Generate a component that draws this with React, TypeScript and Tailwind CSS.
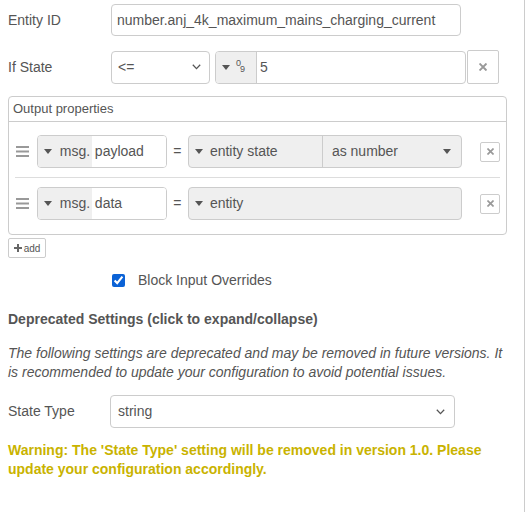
import React from "react";

function Caret() {
    return (
        <svg width="8" height="5" viewBox="0 0 8 5" className="shrink-0">
            <path d="M0 0 L8 0 L4 5 Z" fill="#555" />
        </svg>
    );
}

function Chevron() {
    return (
        <svg width="9" height="6" viewBox="0 0 9 6" className="shrink-0">
            <path d="M0.8 0.8 L4.5 4.6 L8.2 0.8" fill="none" stroke="#555" strokeWidth="1.3" />
        </svg>
    );
}

function Times({ size = 9 }: { size?: number }) {
    return (
        <svg width={size} height={size} viewBox="0 0 10 10" className="shrink-0">
            <path d="M1.5 1.5 L8.5 8.5 M8.5 1.5 L1.5 8.5" stroke="#999" strokeWidth="2.4" strokeLinecap="square" />
        </svg>
    );
}

function Handle() {
    return (
        <svg width="13" height="11" viewBox="0 0 13 11" className="shrink-0">
            <rect x="0" y="0" width="13" height="2" fill="#999" />
            <rect x="0" y="4.5" width="13" height="2" fill="#999" />
            <rect x="0" y="9" width="13" height="2" fill="#999" />
        </svg>
    );
}

function OutputRow({ name, value, extra, last }: { name: string; value: string; extra?: string; last?: boolean }) {
    return (
        <div className={`flex items-center py-[9px] ${last ? "" : "border-b border-[#ddd]"}`}>
            <div className="w-[22px] pl-[1px]">
                <Handle />
            </div>
            <div className="flex h-[33px] w-[131px] rounded-[4px] border border-[#ccc] overflow-hidden">
                <div className="flex w-[54px] items-center gap-[8px] bg-[#efefef] pl-[6px]">
                    <Caret />
                    <span>msg.</span>
                </div>
                <div className="flex flex-1 items-center pl-[3px] bg-white text-[#555]">{name}</div>
            </div>
            <div className="w-[21px] text-center">=</div>
            <div className="flex h-[33px] w-[276px] rounded-[4px] border border-[#ccc] bg-[#efefef] overflow-hidden">
                <div className={`flex items-center gap-[7px] pl-[6px] ${extra ? "w-[134px] border-r border-[#ccc]" : "flex-1"}`}>
                    <Caret />
                    <span>{value}</span>
                </div>
                {extra && (
                    <div className="flex flex-1 items-center justify-between pl-[9px] pr-[10px]">
                        <span>{extra}</span>
                        <Caret />
                    </div>
                )}
            </div>
            <div className="ml-[18px] flex h-[20px] w-[20px] items-center justify-center rounded-[2px] border border-[#ccc]">
                <Times size={7} />
            </div>
        </div>
    );
}

export default function App() {
    return (
        <div className="h-[512px] w-[525px] border-r border-[#ccc] bg-white pl-2 pt-[4px] font-['Liberation_Sans',Arial,sans-serif] text-[14px] text-[#555]">
            {/* Entity ID */}
            <div className="flex items-center">
                <label className="w-[103px]">Entity ID</label>
                <div className="flex h-[32px] w-[350px] items-center rounded-[4px] border border-[#ccc] px-[5px]">
                    number.anj_4k_maximum_mains_charging_current
                </div>
            </div>

            {/* If State */}
            <div className="mt-[14px] flex items-center">
                <label className="w-[103px]">If State</label>
                <div className="flex h-[33px] w-[99px] items-center justify-between rounded-[4px] border border-[#ccc] pl-[6px] pr-[8px]">
                    <span>&lt;=</span>
                    <Chevron />
                </div>
                <div className="ml-[5px] flex h-[33px] w-[251px] overflow-hidden rounded-[4px] border border-[#ccc]">
                    <div className="flex w-[41px] items-center gap-[6px] border-r border-[#ccc] bg-[#efefef] pl-[6px]">
                        <Caret />
                        <span className="relative h-[16px] w-[10px] text-[9px] leading-none">
                            <span className="absolute left-0 top-0">0</span>
                            <span className="absolute left-[4px] top-[6px]">9</span>
                        </span>
                    </div>
                    <div className="flex flex-1 items-center pl-[3px]">5</div>
                </div>
                <div className="ml-[1px] flex h-[34px] w-[32px] items-center justify-center rounded-[2px] border border-[#ccc]">
                    <Times size={8} />
                </div>
            </div>

            {/* Output properties */}
            <div className="mt-[12px] w-[499px] rounded-[4px] border border-[#ccc]">
                <div className="flex h-[25px] items-center border-b border-[#ccc] pl-[4px] text-[13px]">Output properties</div>
                <div className="px-[6px] pt-[4px] pb-[5px]">
                    <OutputRow name="payload" value="entity state" extra="as number" />
                    <OutputRow name="data" value="entity" last />
                </div>
            </div>

            <div className="mt-[3px] flex h-[20px] w-[38px] items-center justify-center gap-[2px] rounded-[2px] border border-[#ccc] text-[10px]">
                <svg width="8" height="8" viewBox="0 0 8 8">
                    <path d="M3 0 H5 V3 H8 V5 H5 V8 H3 V5 H0 V3 H3 Z" fill="#666" />
                </svg>
                <span>add</span>
            </div>

            {/* Block Input Overrides */}
            <div className="mt-[12px] flex items-center pl-[104px]">
                <input type="checkbox" defaultChecked className="m-0 h-[13px] w-[13px] accent-[#0b62d6]" />
                <span className="ml-[13px]">Block Input Overrides</span>
            </div>

            {/* Deprecated */}
            <div className="mt-[18px] font-bold">Deprecated Settings (click to expand/collapse)</div>
            <p className="mt-[14px] pr-[20px] italic leading-[19px]">
                The following settings are deprecated and may be removed in future versions. It is recommended to update your configuration to avoid potential issues.
            </p>

            <div className="mt-[13px] flex items-center">
                <label className="w-[102px]">State Type</label>
                <div className="flex h-[33px] w-[345px] items-center justify-between rounded-[4px] border border-[#ccc] pl-[7px] pr-[9px]">
                    <span>string</span>
                    <Chevron />
                </div>
            </div>

            <p className="mt-[13px] pr-[30px] font-bold leading-[19px] text-[#c9b300]">
                Warning: The 'State Type' setting will be removed in version 1.0. Please update your configuration accordingly.
            </p>
        </div>
    );
}
